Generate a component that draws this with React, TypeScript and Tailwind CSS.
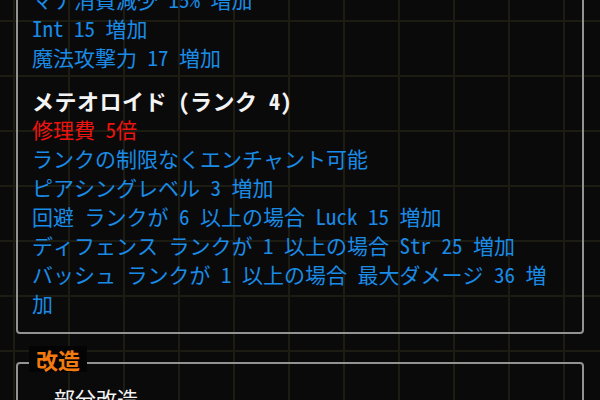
import React from 'react';

const blue = 'text-[#1a8be6]';

function Line({ children, className = blue }: { children: React.ReactNode; className?: string }) {
    return <div className={className}>{children}</div>;
}

export default function App() {
    return (
        <div
            className="h-[400px] w-[600px] overflow-hidden bg-[#0a0a0a] bg-[linear-gradient(to_right,#1c1c12_2px,transparent_2px),linear-gradient(to_bottom,#1c1c12_2px,transparent_2px)] [background-size:55px_55px] [background-position:13px_20px] text-[21px] leading-[29px]"
            style={{ fontFamily: '"Noto Sans Mono CJK JP", "Noto Sans CJK JP", "DejaVu Sans Mono", monospace' }}
        >
            {/* enchant panel, its top edge is scrolled off */}
            <div className="-mt-[27px] ml-[16px] w-[568px] rounded-[4px] border-2 border-[#939393] pt-[10px] pb-[14px] pl-[14px]">
                <div className="w-[525px]">
                    <Line>マナ消費減少 15% 増加</Line>
                    <Line>Int 15 増加</Line>
                    <Line>魔法攻撃力 17 増加</Line>

                    <div className="mt-[14px] text-[22px] font-bold tracking-[0.5px] text-[#f4f4f4]">メテオロイド (ランク 4)</div>
                    <Line className="text-[#ec1410]">修理費 5倍</Line>
                    <Line>ランクの制限なくエンチャント可能</Line>
                    <Line>ピアシングレベル 3 増加</Line>
                    <Line>回避 ランクが 6 以上の場合 Luck 15 増加</Line>
                    <Line>ディフェンス ランクが 1 以上の場合 Str 25 増加</Line>
                    <Line>バッシュ ランクが 1 以上の場合 最大ダメージ 36 増加</Line>
                </div>
            </div>

            {/* upgrade panel */}
            <div className="mt-[12px]">
                <div className="relative z-10 ml-[29px] w-fit bg-[#040404] px-[7px] text-[22px] leading-[26px] font-bold text-[#f27a10]">
                    改造
                </div>
                <div className="-mt-[10px] ml-[16px] h-[200px] w-[568px] rounded-[4px] border-2 border-[#939393] pt-[20px] pl-[36px]">
                    <div className="text-[#f4f4f4]">部分改造</div>
                </div>
            </div>
        </div>
    );
}
